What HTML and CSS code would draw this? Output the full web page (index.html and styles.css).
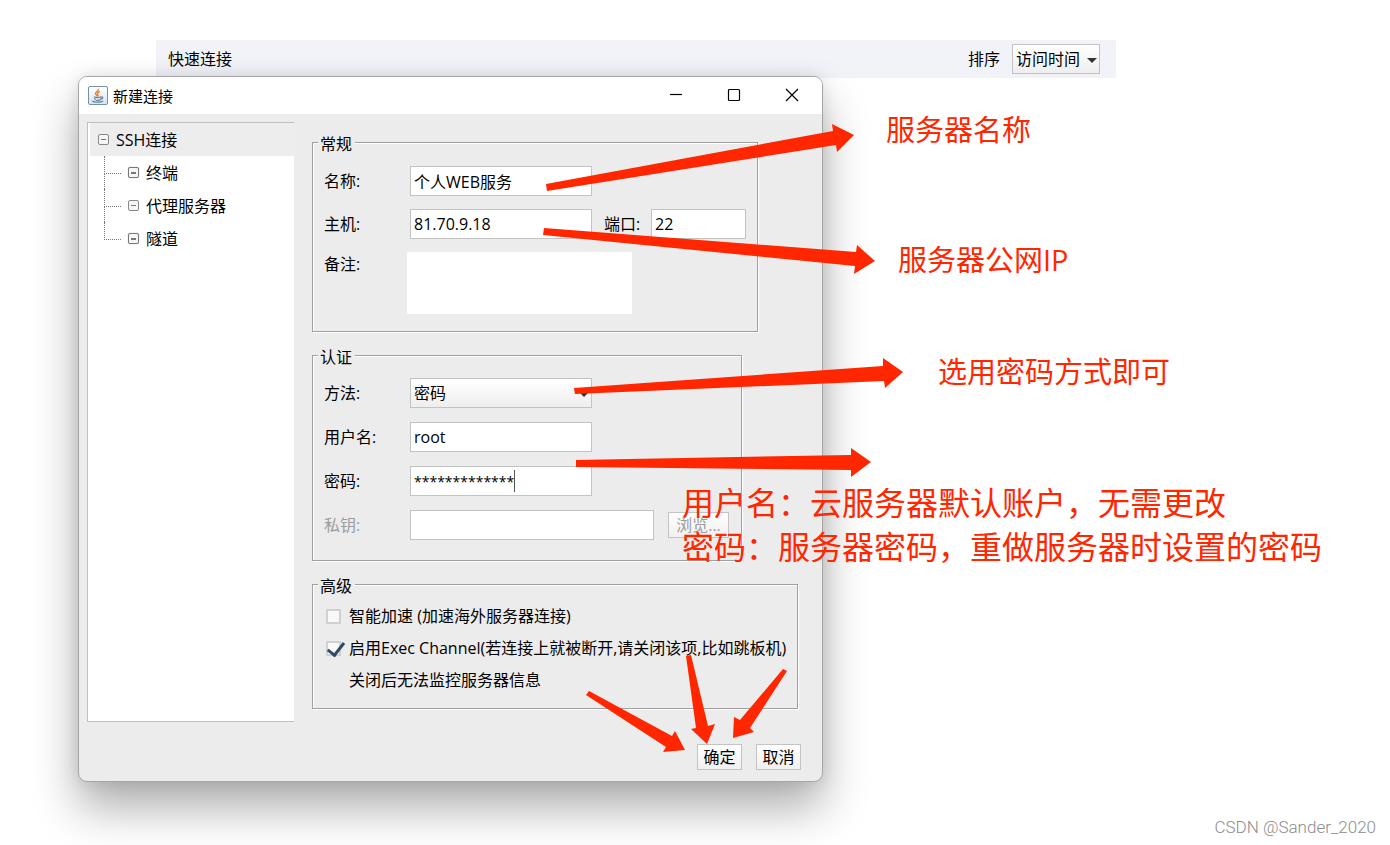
FILE: index.html
```
<!DOCTYPE html>
<html lang="zh-CN">
<head>
    <meta charset="utf-8">
    <title>新建连接</title>
    <link rel="stylesheet" href="styles.css">
</head>
<body>
    <header class="quick-bar">
        <span class="quick-title">快速连接</span>
        <label for="sort">排序</label>
        <div class="select-wrap sort-wrap">
            <select id="sort">
                <option>访问时间</option>
            </select>
        </div>
    </header>

    <section class="dialog">
        <div class="title-bar">
            <svg class="java-icon" width="20" height="20" viewBox="0 0 20 20">
                <defs>
                    <linearGradient id="tile" x1="0" y1="0" x2="0" y2="1">
                        <stop offset="0" stop-color="#fff"/>
                        <stop offset="1" stop-color="#dfe3e6"/>
                    </linearGradient>
                </defs>
                <rect x="0.5" y="0.5" width="19" height="18" rx="1.5" fill="url(#tile)" stroke="#7590a8"/>
                <path d="M10.5 3c.6 2-3.6 2.800-3 4.800.3 1 1.500 1.500 2 2.700M12 5.500c-2 .8-3 1.600-2.300 2.900.4.8.6 1.300 0 2.100" fill="none" stroke="#e8873c" stroke-width="1.500"/>
                <path d="M6 10.800c2 .9 5.500.8 7.500 0M6.500 12c.3 2 .8 2.300 3.500 2.300s3-.5 3-2.300M13.300 11c2-.6 2 1.600-.3 2.200M4.200 15c1.800 1.600 9 1.500 11 0" fill="none" stroke="#5b86aa" stroke-width="1.200"/>
            </svg>
            <h1>新建连接</h1>
            <button class="win-btn" aria-label="最小化">
                <svg width="14" height="14" viewBox="0 0 14 14"><path d="M1 6.500h12"/></svg>
            </button>
            <button class="win-btn" aria-label="最大化">
                <svg width="14" height="14" viewBox="0 0 14 14"><rect x="1.500" y="1.500" width="11" height="11" rx="1"/></svg>
            </button>
            <button class="win-btn" aria-label="关闭">
                <svg width="14" height="14" viewBox="0 0 14 14"><path d="M1 1l12 12M13 1L1 13"/></svg>
            </button>
        </div>

        <div class="dialog-body">
            <nav class="tree">
                <div class="tree-root"><span class="expander"></span>SSH连接</div>
                <ul>
                    <li><span class="expander dark"></span>终端</li>
                    <li><span class="expander"></span>代理服务器</li>
                    <li><span class="expander dark"></span>隧道</li>
                </ul>
            </nav>

            <form class="settings">
                <fieldset class="general">
                    <legend>常规</legend>
                    <div class="rows">
                        <div class="row">
                            <label for="name">名称:</label>
                            <input class="medium" id="name" type="text" value="个人WEB服务">
                        </div>
                        <div class="row">
                            <label for="host">主机:</label>
                            <input class="medium" id="host" type="text" value="81.70.9.18">
                            <label class="port-label" for="port">端口:</label>
                            <input class="short" id="port" type="text" value="22">
                        </div>
                        <div class="row row-note">
                            <label for="note">备注:</label>
                            <textarea id="note"></textarea>
                        </div>
                    </div>
                </fieldset>

                <fieldset class="auth">
                    <legend>认证</legend>
                    <div class="rows">
                        <div class="row">
                            <label for="method">方法:</label>
                            <div class="select-wrap medium">
                                <select id="method">
                                    <option>密码</option>
                                </select>
                            </div>
                        </div>
                        <div class="row">
                            <label for="user">用户名:</label>
                            <input class="medium" id="user" type="text" value="root">
                        </div>
                        <div class="row">
                            <label for="pass">密码:</label>
                            <div class="pass-wrap medium">
                                <input id="pass" type="text" value="*************">
                                <span class="caret"></span>
                            </div>
                        </div>
                        <div class="row disabled">
                            <label for="key">私钥:</label>
                            <input class="long" id="key" type="text" disabled>
                            <button type="button" class="btn browse" disabled>浏览...</button>
                        </div>
                    </div>
                </fieldset>

                <fieldset class="advanced">
                    <legend>高级</legend>
                    <div class="checks">
                        <label><input type="checkbox">智能加速 (加速海外服务器连接)</label>
                        <label><input type="checkbox" checked>启用Exec Channel(若连接上就被断开,请关闭该项,比如跳板机)</label>
                        <p>关闭后无法监控服务器信息</p>
                    </div>
                </fieldset>
            </form>
        </div>

        <div class="dialog-footer">
            <button type="button" class="btn">确定</button>
            <button type="button" class="btn">取消</button>
        </div>
    </section>

    <!-- red arrows over the dialog -->
    <svg class="arrows" width="1390" height="845" viewBox="0 0 1390 845">
        <polygon points="546,184 833,131 832,124 854,135 837,152 836,145 547,191"/>
        <polygon points="544,228 856,252 857,245 875,261 854,274 855,266 543,235"/>
        <polygon points="574,388 883,366 883,358 903,372 885,388 884,381 575,394"/>
        <polygon points="576,460 851,455 851,448 871,462 851,477 851,470 576,467"/>
        <polygon points="589,691 672,736 675,731 685,750 663,752 666,747 586,695"/>
        <polygon points="686,656 691,655 708,726 715,724 707,744 691,729 696,728"/>
        <polygon points="783,669 740,720 734,717 733,738 754,732 750,728 787,671"/>
    </svg>
    <p class="note note-name">服务器名称</p>
    <p class="note note-ip">服务器公网IP</p>
    <p class="note note-method">选用密码方式即可</p>
    <p class="note note-login">用户名：云服务器默认账户，无需更改<br>密码：服务器密码，重做服务器时设置的密码</p>

    <footer class="watermark">CSDN @Sander_2020</footer>
</body>
</html>
```

FILE: styles.css
```
* {
    box-sizing: border-box;
}

body, html {
    margin: 0;
    padding: 0;
    height: 100%;
    overflow: hidden;
}

body {
    position: relative;
    background: #fff;
    color: #000;
    font-family: "Open Sans", "Noto Sans CJK SC", sans-serif;
    font-size: 16px;
    line-height: 20px;
}

input, select, textarea, button {
    font: inherit;
    color: inherit;
    margin: 0;
    outline: none;
}

p, h1, ul {
    margin: 0;
    padding: 0;
}

/* bar behind the dialog */
.quick-bar {
    display: flex;
    align-items: center;
    height: 38px;
    margin: 40px 274px 0 156px;
    padding: 0 16px 0 12px;
    background: #f2f3f8;
}

.quick-title {
    margin-right: auto;
}

.select-wrap {
    position: relative;
}

.select-wrap:after {
    content: "";
    position: absolute;
    right: 3px;
    top: 14px;
    border: 5px solid transparent;
    border-top: 5px solid #333;
    border-bottom: 0;
}

.select-wrap select {
    appearance: none;
    display: block;
    width: 100%;
    height: 30px;
    padding: 0 3px;
    border: 1px solid #c3c3c3;
    border-radius: 0;
    background: linear-gradient(#fff, #eee);
}

.sort-wrap {
    width: 88px;
    margin-left: 12px;
}

/* dialog window */
.dialog {
    position: absolute;
    left: 78px;
    top: 76px;
    width: 745px;
    border: 1px solid #a6a6a6;
    border-radius: 9px;
    background: #ececec;
    box-shadow: 0 26px 46px rgba(0, 0, 0, 0.32), 0 0 16px rgba(0, 0, 0, 0.1);
}

.title-bar {
    display: flex;
    align-items: center;
    height: 37px;
    padding-left: 9px;
    padding-right: 1px;
    background: #fff;
    border-radius: 8px 8px 0 0;
}

.title-bar h1 {
    margin: 0 auto 0 5px;
    font-size: 15px;
    font-weight: normal;
}

.win-btn {
    display: flex;
    align-items: center;
    align-self: flex-start;
    justify-content: center;
    width: 58px;
    height: 36px;
    padding: 0;
    border: none;
    background: none;
}

.win-btn svg {
    fill: none;
    stroke: #000;
    stroke-width: 1.2;
}

.dialog-body {
    display: flex;
    align-items: flex-start;
    gap: 18px;
    padding: 8px 8px 0;
}

/* tree on the left */
.tree {
    width: 207px;
    height: 600px;
    padding-left: 2px;
    border: 1px solid #c0c0c0;
    border-right: none;
    background: #fff;
}

.tree-root, .tree li {
    display: flex;
    align-items: center;
    gap: 7px;
    height: 33px;
}

.tree-root {
    padding-left: 8px;
    background: #ededed;
}

.tree ul {
    margin-left: 14px;
    list-style: none;
}

.tree li {
    position: relative;
    padding-left: 24px;
}

.tree li:before {
    content: "";
    position: absolute;
    left: 0;
    top: 0;
    width: 16px;
    height: 17px;
    border-left: 1px dotted #777;
    border-bottom: 1px dotted #777;
}

.tree li:not(:last-child):after {
    content: "";
    position: absolute;
    left: 0;
    top: 17px;
    height: 16px;
    border-left: 1px dotted #777;
}

.expander {
    display: flex;
    align-items: center;
    width: 11px;
    height: 11px;
    padding: 0 2px;
    border: 1px solid #888;
    border-radius: 2px;
    background: #f6f6f6;
}

.expander:before {
    content: "";
    width: 100%;
    height: 1px;
    background: #777;
}

.expander.dark {
    border-color: #777;
    box-shadow: 0 0 1px #999;
}

.expander.dark:before {
    height: 2px;
}

/* form */
.settings {
    display: flex;
    flex-direction: column;
    align-items: flex-start;
    gap: 11px;
    padding-top: 8px;
}

fieldset {
    min-width: 0;
    margin: 0;
    padding: 0 5px;
    border: 1px solid #a0a0a0;
    box-shadow: 1px 1px 0 #fff, inset 1px 1px 0 #fff;
}

legend {
    padding: 4px 3px 1px 2px;
    background: #ececec;
}

.general {
    width: 446px;
    padding-bottom: 17px;
}

.auth {
    width: 430px;
    padding-bottom: 20px;
}

.advanced {
    width: 486px;
    padding-bottom: 12px;
}

.rows {
    display: flex;
    flex-direction: column;
    gap: 14px;
    padding: 10px 6px 0;
}

.general .rows {
    gap: 13px;
    padding-top: 11px;
}

.row {
    display: flex;
    align-items: center;
}

.row label:first-child {
    width: 86px;
}

.row input {
    height: 30px;
    padding: 0 3px;
    border: 1px solid #c3c3c3;
    background: #fff;
}

.medium {
    width: 182px;
}

.short {
    width: 95px;
}

.long {
    width: 244px;
}

.port-label {
    width: 47px;
    margin-left: 12px;
}

.row-note {
    align-items: flex-start;
}

.row.row-note label {
    width: 83px;
    padding-top: 2px;
}

textarea {
    width: 225px;
    height: 62px;
    border: none;
    background: #fff;
    resize: none;
}

.pass-wrap {
    position: relative;
}

.pass-wrap input {
    display: block;
    width: 100%;
    font-size: 14px;
}

.caret {
    position: absolute;
    left: 104px;
    top: 4px;
    width: 1px;
    height: 22px;
    background: #555;
}

.disabled {
    color: #9c9c9c;
}

.btn {
    width: 45px;
    height: 26px;
    padding: 0;
    border: 1px solid #c3c3c3;
    background: linear-gradient(#fff, #f0f0f0);
    line-height: 20px;
    white-space: nowrap;
}

.browse {
    width: 61px;
    margin-left: 14px;
}

.checks {
    padding: 3px 8px 0;
}

.checks label, .checks p {
    display: flex;
    align-items: center;
    height: 32px;
    white-space: nowrap;
}

.checks p {
    padding-left: 23px;
}

.checks input {
    appearance: none;
    position: relative;
    flex-shrink: 0;
    width: 15px;
    height: 15px;
    margin-right: 8px;
    border: 2px solid #d0d0d0;
    background: #f8f8f8;
}

.checks input:checked:after {
    content: "";
    position: absolute;
    left: 3px;
    top: -4px;
    width: 7px;
    height: 14px;
    border-right: 3px solid #2c4a66;
    border-bottom: 3px solid #2c4a66;
    transform: rotate(38deg);
}

.dialog-footer {
    display: flex;
    justify-content: flex-end;
    gap: 14px;
    padding: 22px 21px 11px;
}

/* notes written next to the arrows */
.arrows {
    position: absolute;
    left: 0;
    top: 0;
    fill: #ff2600;
    pointer-events: none;
}

.note {
    position: absolute;
    color: #ff2600;
    font-size: 29px;
    line-height: 44px;
    white-space: nowrap;
}

.note-name {
    left: 886px;
    top: 108px;
}

.note-ip {
    left: 898px;
    top: 238px;
}

.note-method {
    left: 938px;
    top: 350px;
}

.note-login {
    left: 682px;
    top: 481px;
    font-size: 32px;
}

.watermark {
    position: absolute;
    right: 14px;
    bottom: 8px;
    color: #8c8c8c;
    font-family: Roboto, "Liberation Sans", sans-serif;
    font-size: 17px;
    font-weight: 300;
}
```
